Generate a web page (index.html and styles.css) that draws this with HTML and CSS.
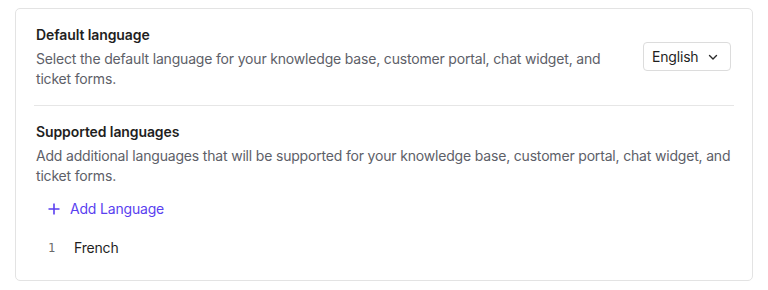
FILE: index.html
```html
<!DOCTYPE html>
<html lang="en">
<head>
<meta charset="utf-8">
<link rel="stylesheet" href="styles.css">
</head>
<body>
<div class="card">
  <section class="section default">
    <div class="text">
      <h2 class="title">Default language</h2>
      <p class="desc">Select the default language for your knowledge base, customer portal, chat widget, and ticket forms.</p>
    </div>
    <button class="select" type="button">
      <span>English</span>
      <svg class="chev" width="10" height="10" viewBox="0 0 10 10" fill="none"><path d="M1.5 3.5L5 7L8.5 3.5" stroke="#2a2a2a" stroke-width="1.4" stroke-linecap="round" stroke-linejoin="round"/></svg>
    </button>
  </section>
  <hr class="divider">
  <section class="section supported">
    <h2 class="title">Supported languages</h2>
    <p class="desc">Add additional languages that will be supported for your knowledge base, customer portal, chat widget, and ticket forms.</p>
    <button class="add" type="button">
      <svg width="12" height="12" viewBox="0 0 12 12" fill="none"><path d="M6 0.5V11.5M0.5 6H11.5" stroke="currentColor" stroke-width="1.6"/></svg>
      <span>Add Language</span>
    </button>
    <ol class="langs">
      <li class="lang"><span class="num">1</span><span class="name">French</span></li>
    </ol>
  </section>
</div>
</body>
</html>
```
FILE: styles.css
```css
* { box-sizing: border-box; }
body {
  margin: 0;
  padding: 8px 15px;
  font-family: Inter, "Noto Sans", sans-serif;
  font-size: 14px;
  line-height: 20px;
  letter-spacing: -0.18px;
  color: #1f1f1f;
  background: #fff;
}
.card {
  border: 1px solid #e3e3e3;
  border-radius: 5px;
  padding: 16px 18px 22px;
}
.section { padding: 0 2px; }
.default {
  display: flex;
  align-items: flex-start;
  gap: 24px;
}
.default .text { flex: 1; }
.title {
  margin: 0;
  font-size: 14px;
  font-weight: 600;
  line-height: 20px;
  letter-spacing: -0.1px;
  color: #1f1f1f;
}
.desc {
  margin: 4px 0 0;
  color: #5d6068;
}
.select {
  margin-top: 17px;
  margin-right: 1px;
  width: 88px;
  height: 29px;
  display: flex;
  align-items: center;
  justify-content: space-between;
  padding: 0 12px 0 8px;
  border: 1px solid #dcdcdc;
  border-radius: 4px;
  background: #fff;
  font: inherit;
  letter-spacing: inherit;
  color: #1f1f1f;
}
.chev { display: block; }
.divider {
  border: 0;
  border-top: 1px solid #e6e6e6;
  margin: 16px 0 16px;
}
.add {
  margin-top: 13px;
  display: flex;
  align-items: center;
  gap: 10px;
  padding: 0 0 0 12px;
  border: 0;
  background: none;
  font: inherit;
  letter-spacing: inherit;
  color: #5a3ff0;
}
.add svg { display: block; }
.langs {
  list-style: none;
  margin: 19px 0 0;
  padding: 0;
}
.lang {
  display: flex;
  align-items: center;
}
.num {
  width: 38px;
  padding-left: 12px;
  font-family: "DejaVu Sans Mono", monospace;
  font-size: 12px;
  color: #6b6b6b;
}
.name { color: #1f1f1f; }
```
